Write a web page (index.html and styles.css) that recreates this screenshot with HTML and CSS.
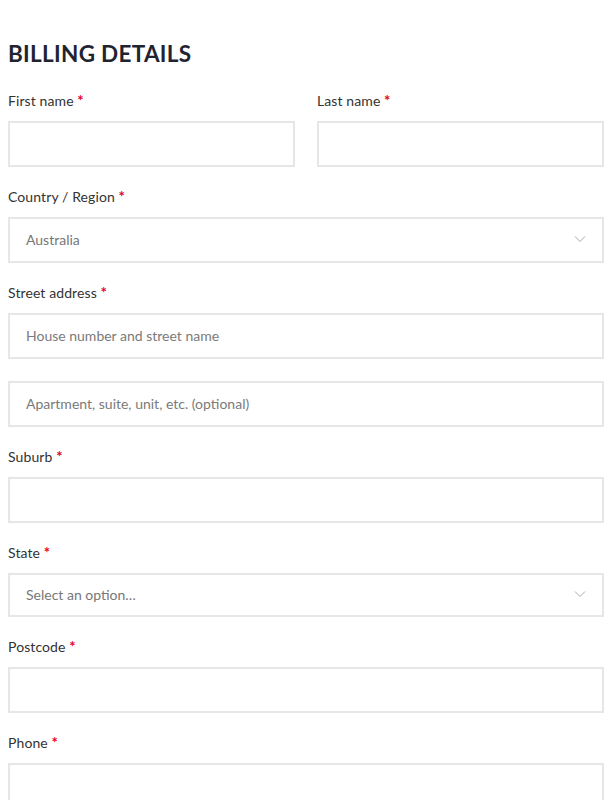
FILE: index.html
```html
<!DOCTYPE html>
<html lang="en">

<head>
    <meta charset="utf-8">
    <meta name="viewport" content="width=device-width, initial-scale=1.0">
    <title>Checkout</title>

    <link rel="stylesheet" href="styles.css">
</head>

<body>
    <main class="billing">
        <h3 class="titel">BILLING DETAILS</h3>

        <div class="raekke">
            <p class="felt">
                <label>First name <abbr class="kraevet">*</abbr></label>
                <input type="text" class="input">
            </p>
            <p class="felt">
                <label>Last name <abbr class="kraevet">*</abbr></label>
                <input type="text" class="input">
            </p>
        </div>

        <p class="felt">
            <label>Country / Region <abbr class="kraevet">*</abbr></label>
            <span class="input vaelg">
                <span class="valgt">Australia</span>
                <svg class="pil" width="12" height="8" viewBox="0 0 12 8"><polyline points="1,1.5 6,6.5 11,1.5" fill="none" stroke="#a8a8a8" stroke-width="1"/></svg>
            </span>
        </p>

        <p class="felt">
            <label>Street address <abbr class="kraevet">*</abbr></label>
            <input type="text" class="input" placeholder="House number and street name">
            <input type="text" class="input ekstra" placeholder="Apartment, suite, unit, etc. (optional)">
        </p>

        <p class="felt">
            <label>Suburb <abbr class="kraevet">*</abbr></label>
            <input type="text" class="input">
        </p>

        <p class="felt">
            <label>State <abbr class="kraevet">*</abbr></label>
            <span class="input vaelg smal">
                <span class="valgt">Select an option…</span>
                <svg class="pil" width="12" height="8" viewBox="0 0 12 8"><polyline points="1,1.5 6,6.5 11,1.5" fill="none" stroke="#a8a8a8" stroke-width="1"/></svg>
            </span>
        </p>

        <p class="felt">
            <label>Postcode <abbr class="kraevet">*</abbr></label>
            <input type="text" class="input">
        </p>

        <p class="felt">
            <label>Phone <abbr class="kraevet">*</abbr></label>
            <input type="tel" class="input">
        </p>
    </main>
</body></html>
```

FILE: styles.css
```css
        body {
            margin: 0;
            font-family: Lato, "Noto Sans", sans-serif;
            color: #333;
            background: #fff;
        }

        .billing {
            width: 596px;
            padding: 41px 0 0 8px;
        }

        .titel {
            margin: 0 0 24px;
            font-size: 22.5px;
            line-height: 26px;
            font-weight: 700;
            color: #1f2430;
            letter-spacing: 0.3px;
        }

        .raekke {
            display: grid;
            grid-template-columns: 287px 287px;
            column-gap: 22px;
        }

        .felt {
            display: flex;
            flex-direction: column;
            margin: 0 0 20px;
        }

        label {
            height: 20px;
            font-size: 14px;
            line-height: 20px;
            margin-bottom: 10px;
            letter-spacing: 0.1px;
        }

        .kraevet {
            color: #e4002b;
            font-size: 15px;
            line-height: 0;
            font-weight: 700;
            text-decoration: none;
            border: none;
        }

        .input {
            box-sizing: border-box;
            height: 46px;
            width: 100%;
            margin: 0;
            border: 2px solid #e6e6e6;
            background: #fff;
            padding: 0 16px 2px;
            font-family: Lato, "Noto Sans", sans-serif;
            font-size: 14px;
            color: #777;
            outline: none;
        }

        .input::placeholder {
            color: #7a7a7a;
        }

        .ekstra {
            margin-top: 22px;
        }

        .vaelg {
            display: flex;
            align-items: center;
            justify-content: space-between;
            padding-right: 16px;
        }

        .smal {
            height: 44px;
        }

        .pil {
            display: block;
        }
```
